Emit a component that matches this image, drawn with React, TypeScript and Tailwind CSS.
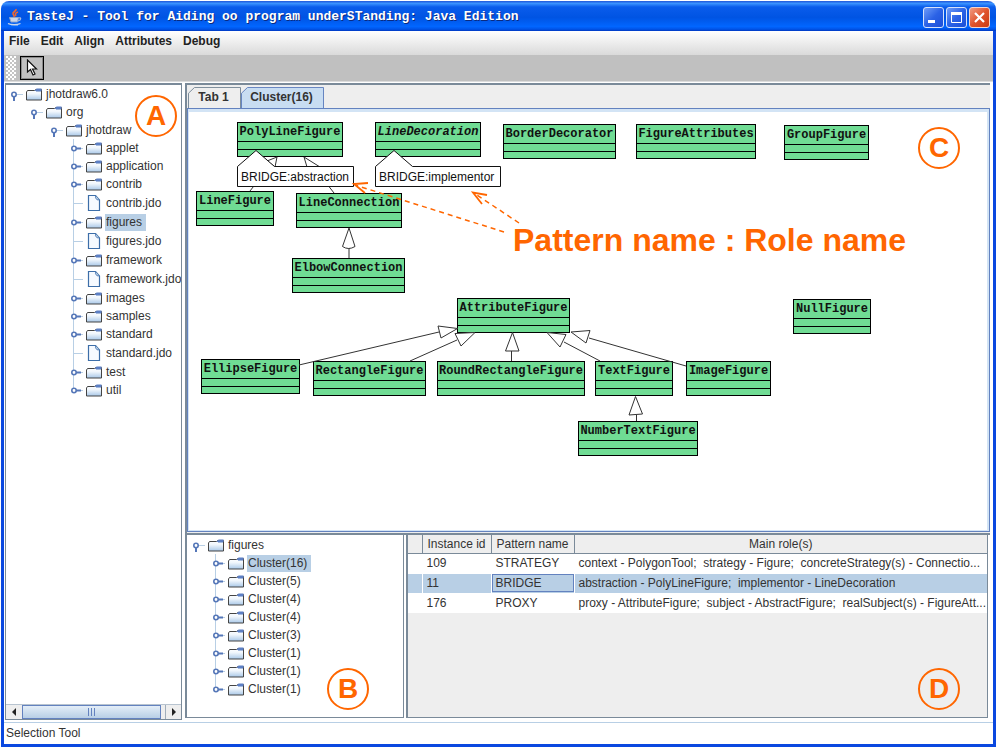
import React from "react";

type TreeItem = {
  label: string;
  kind?: "file";
  selected?: boolean;
  children?: TreeItem[];
};

const projectTree: TreeItem = {
  label: "jhotdraw6.0",
  children: [
    {
      label: "org",
      children: [
        {
          label: "jhotdraw",
          children: [
            { label: "applet" },
            { label: "application" },
            { label: "contrib" },
            { label: "contrib.jdo", kind: "file" },
            { label: "figures", selected: true },
            { label: "figures.jdo", kind: "file" },
            { label: "framework" },
            { label: "framework.jdo", kind: "file" },
            { label: "images" },
            { label: "samples" },
            { label: "standard" },
            { label: "standard.jdo", kind: "file" },
            { label: "test" },
            { label: "util" },
          ],
        },
      ],
    },
  ],
};

const clusterTree: TreeItem = {
  label: "figures",
  children: [
    { label: "Cluster(16)", selected: true },
    { label: "Cluster(5)" },
    { label: "Cluster(4)" },
    { label: "Cluster(4)" },
    { label: "Cluster(3)" },
    { label: "Cluster(1)" },
    { label: "Cluster(1)" },
    { label: "Cluster(1)" },
  ],
};

type ClassBox = { name: string; x: number; y: number; abstract?: boolean };

const classes: ClassBox[] = [
  { name: "PolyLineFigure", x: 48, y: 10 },
  { name: "LineDecoration", x: 186, y: 10, abstract: true },
  { name: "BorderDecorator", x: 314, y: 12 },
  { name: "FigureAttributes", x: 447, y: 12 },
  { name: "GroupFigure", x: 595, y: 13 },
  { name: "LineFigure", x: 7, y: 79 },
  { name: "LineConnection", x: 107, y: 81 },
  { name: "ElbowConnection", x: 103, y: 146 },
  { name: "AttributeFigure", x: 268, y: 186 },
  { name: "NullFigure", x: 604, y: 187 },
  { name: "EllipseFigure", x: 12, y: 247 },
  { name: "RectangleFigure", x: 124, y: 249 },
  { name: "RoundRectangleFigure", x: 248, y: 249 },
  { name: "TextFigure", x: 406, y: 249 },
  { name: "ImageFigure", x: 497, y: 249 },
  { name: "NumberTextFigure", x: 389, y: 309 },
];

const instances = [
  {
    id: "109",
    pattern: "STRATEGY",
    roles: "context - PolygonTool;  strategy - Figure;  concreteStrategy(s) - Connectio...",
  },
  {
    id: "11",
    pattern: "BRIDGE",
    roles: "abstraction - PolyLineFigure;  implementor - LineDecoration",
    selected: true,
  },
  {
    id: "176",
    pattern: "PROXY",
    roles: "proxy - AttributeFigure;  subject - AbstractFigure;  realSubject(s) - FigureAtt...",
  },
];

function FolderIcon() {
  return (
    <svg viewBox="0 0 16 14" className="h-3.5 w-4 shrink-0" aria-hidden="true">
      <defs>
        <linearGradient id="folder" x1="0" y1="0" x2="0" y2="1">
          <stop offset="0" stopColor="#ffffff" />
          <stop offset="0.4" stopColor="#f0f6fc" />
          <stop offset="1" stopColor="#a9c8e8" />
        </linearGradient>
      </defs>
      <path d="M.5 13V5l1-1.500h7l1.500-1h5.500V13z" fill="url(#folder)" stroke="#444" />
      <path d="M8.500 4l2-2.500h5V4z" fill="#5c7fc4" />
      <path d="M10 4.500h5" stroke="#a3b8dd" />
    </svg>
  );
}

function FileIcon() {
  return (
    <svg viewBox="0 0 16 16" className="size-4 shrink-0" aria-hidden="true">
      <path d="M2.500.500h7l4 4.500v10.500h-11z" fill="#f6faff" stroke="#3d6ea8" strokeWidth="1.200" />
      <path d="M9.500.800v2l1.500 2h2.200" fill="#b8cfe5" stroke="#5f88bd" />
    </svg>
  );
}

function Handle({ open, file, height, rail }: { open: boolean; file: boolean; height: number; rail: "none" | "full" | "half" }) {
  const mid = height / 2;
  return (
    <svg viewBox={`0 0 20 ${height}`} className="w-5 shrink-0" style={{ height }} aria-hidden="true">
      {rail !== "none" && (
        <path d={`M7.500 0V${rail === "full" ? height : mid}`} stroke="#b8cfe5" fill="none" />
      )}
      <path d={`M8 ${mid + 0.5}H17`} stroke="#b8cfe5" />
      {!file && (
        <>
          <path
            d={open ? `M8 ${mid + 2}V${mid + 7}` : `M10 ${mid + 0.5}H15`}
            stroke="#5577b8"
            strokeWidth="2"
          />
          <circle cx="8" cy={mid + 0.5} r="2.200" fill="#fff" stroke="#5577b8" strokeWidth="1.600" />
        </>
      )}
    </svg>
  );
}

function TreeNode({ item, root = false, last = true }: { item: TreeItem; root?: boolean; last?: boolean }) {
  const file = item.kind === "file";
  const open = Boolean(item.children);
  return (
    <li role="treeitem" aria-selected={Boolean(item.selected)}>
      <div className={file ? "flex h-5 items-center" : "flex h-[18px] items-center"}>
        <Handle
          open={open}
          file={file}
          height={file ? 20 : 18}
          rail={root || open ? "none" : last ? "half" : "full"}
        />
        {file ? <FileIcon /> : <FolderIcon />}
        <span
          className={
            item.selected
              ? "ml-[3px] bg-[#b8cfe5] pr-1 pl-px leading-[17px] whitespace-nowrap"
              : "ml-[3px] pr-1 pl-px leading-[17px] whitespace-nowrap"
          }
        >
          {item.label}
        </span>
      </div>
      {item.children && (
        <ul role="group" className="pl-5">
          {item.children.map((child, i) => (
            <TreeNode key={i} item={child} last={i === item.children!.length - 1} />
          ))}
        </ul>
      )}
    </li>
  );
}

function Marker({ letter }: { letter: string }) {
  return (
    <div className="flex size-[42px] items-center justify-center rounded-full border-2 border-[#ff6600] text-[28px] leading-none font-bold text-[#ff6600]">
      {letter}
    </div>
  );
}

function JavaLogo() {
  return (
    <svg viewBox="0 0 16 18" className="h-[18px] w-4 shrink-0" fill="none" aria-hidden="true">
      <path d="M9 1c1 2-4 3-3 5 .5 1 1.500 1.500 1 3M11 4c-3 1-3 2.500-2 4" stroke="#f0672e" strokeWidth="1.600" />
      <path d="M2.500 9.500h9l-1 4.500h-6.500z" fill="#c9d6ea" stroke="#8fa5cc" />
      <path d="M11.500 10c3-1 3 2-.5 3" stroke="#a9bbdc" strokeWidth="1.200" />
      <path d="M1 15.500c3 1.500 9 1.500 12.500 0M4 17h7" stroke="#c9d6ea" strokeWidth="1.200" />
    </svg>
  );
}

function TitleBar() {
  const btn =
    "flex size-[21px] items-center justify-center rounded-[3px] border border-[#d5e2fb] bg-gradient-to-br from-[#6f9bf7] via-[#2b62e6] to-[#1c4fd8]";
  return (
    <header className="flex h-[30px] shrink-0 items-center rounded-t-lg bg-[linear-gradient(180deg,#1f55d8_0%,#3a93ff_8%,#0a5ceb_20%,#0054e3_55%,#0166ff_85%,#0054e8_94%,#0038c0_100%)] pt-0.5 pr-1.5 pl-1.5">
      <JavaLogo />
      <h1 className="ml-1 flex-1 font-['Liberation_Mono',monospace] text-[13px] leading-4 font-bold whitespace-nowrap text-white [text-shadow:1px_1px_0_#0a2a80]">
        TasteJ - Tool for Aiding oo program underSTanding: Java Edition
      </h1>
      <div className="flex gap-0.5">
        <button type="button" aria-label="Minimize" className={btn}>
          <svg viewBox="0 0 19 19" className="size-[19px]">
            <path d="M4 13.500h7" stroke="#fff" strokeWidth="3" />
          </svg>
        </button>
        <button type="button" aria-label="Maximize" className={btn}>
          <svg viewBox="0 0 19 19" className="size-[19px]" fill="none">
            <path d="M4.500 5v9.500h10V5" stroke="#fff" />
            <path d="M4 5.500h11" stroke="#fff" strokeWidth="3" />
          </svg>
        </button>
        <button
          type="button"
          aria-label="Close"
          className="flex size-[21px] items-center justify-center rounded-[3px] border border-[#f3d5cc] bg-gradient-to-br from-[#f09a80] via-[#e0542c] to-[#c93a10]"
        >
          <svg viewBox="0 0 19 19" className="size-[19px]">
            <path d="M5 5l9 9M14 5l-9 9" stroke="#fff" strokeWidth="2.200" />
          </svg>
        </button>
      </div>
    </header>
  );
}

function Toolbar() {
  return (
    <div role="toolbar" className="flex h-[27px] shrink-0 items-center border-b border-[#dcdcdc] bg-[#c0c0c0] pl-0.5">
      <svg className="h-6 w-2.5" aria-hidden="true">
        <defs>
          <pattern id="grip" width="4" height="4" patternUnits="userSpaceOnUse">
            <rect width="4" height="4" fill="#c4c4c4" />
            <rect width="2" height="2" fill="#fff" />
            <rect x="2" y="2" width="2" height="2" fill="#fff" />
          </pattern>
        </defs>
        <rect width="10" height="24" fill="url(#grip)" />
      </svg>
      <button
        type="button"
        aria-label="Selection Tool"
        className="ml-1 flex size-6 items-center justify-center border border-black bg-[#c0c0c0] outline-1 -outline-offset-2 outline-[#8a8a8a]"
      >
        <svg viewBox="0 0 12 18" className="h-[18px] w-3">
          <path
            d="M1.500 1v12l3-2.500 2.500 5.500 2-1-2.500-5h4z"
            fill="#fff"
            stroke="#111"
            strokeWidth="1.200"
          />
        </svg>
      </button>
    </div>
  );
}

function ScrollBar() {
  return (
    <div className="flex h-[15px] shrink-0 border-t border-[#b8c4d0] bg-[#eeeeee]">
      <button type="button" aria-label="Scroll left" className="flex w-4 items-center justify-center">
        <svg viewBox="0 0 6 8" className="h-2 w-1.5">
          <path d="M5 0v8L1 4z" fill="#222" />
        </svg>
      </button>
      <div className="flex flex-1 pr-1">
        <div className="flex flex-1 items-center justify-center gap-0.5 border border-[#6382bf] bg-gradient-to-b from-[#e4eef8] to-[#b8cfe5]">
          <i className="h-2 w-px bg-[#6382bf]" />
          <i className="h-2 w-px bg-[#6382bf]" />
          <i className="h-2 w-px bg-[#6382bf]" />
        </div>
      </div>
      <button
        type="button"
        aria-label="Scroll right"
        className="flex w-4 items-center justify-center border-l border-[#a0adba]"
      >
        <svg viewBox="0 0 6 8" className="h-2 w-1.5">
          <path d="M1 0v8l4-4z" fill="#222" />
        </svg>
      </button>
    </div>
  );
}

function Tab({ label, active = false }: { label: string; active?: boolean }) {
  return (
    <button
      type="button"
      role="tab"
      aria-selected={active}
      className={
        active
          ? "relative h-full w-[83px] pr-0.5 pb-0.5 text-center font-bold"
          : "relative h-full w-[53px] pr-0.5 pb-0.5 text-center font-bold"
      }
    >
      <svg
        className="absolute inset-0 size-full"
        viewBox={active ? "0 0 83 22" : "0 0 53 22"}
        preserveAspectRatio="none"
        aria-hidden="true"
      >
        {active ? (
          <path d="M.500 22V6.500l6-6h76V22" fill="#c8ddf2" stroke="#6382bf" />
        ) : (
          <path d="M.500 22V6.500l6-6h46V22" fill="#eeeeee" stroke="#7a8a99" />
        )}
      </svg>
      <span className="relative">{label}</span>
    </button>
  );
}

function ClassNode({ node }: { node: ClassBox }) {
  return (
    <div
      className="absolute h-[35px] border border-black bg-[#70dc94] font-['Liberation_Mono',monospace] text-[#111]"
      style={{ left: node.x, top: node.y, width: node.name.length * 7 + 8 }}
    >
      <div
        className={
          node.abstract
            ? "flex h-[19px] justify-center border-b border-black text-xs leading-[18px] font-bold whitespace-nowrap italic"
            : "flex h-[19px] justify-center border-b border-black text-xs leading-[18px] font-bold whitespace-nowrap"
        }
      >
        {node.name}
      </div>
      <div className="h-2 border-b border-black" />
    </div>
  );
}

function Diagram() {
  return (
    <div className="relative min-h-0 flex-1 overflow-hidden bg-white">
      {classes.map((c) => (
        <ClassNode key={c.name} node={c} />
      ))}
      {/* generalization arrows */}
      <svg className="absolute inset-0 size-full" fill="#fff" stroke="#333" strokeWidth="1">
        <path d="M61 79L78 57M145 81L124 54" />
        <path d="M88 45L78 49L86 55zM115 45L118 55L131 55z" />
        <path d="M160 146v-10M160 116l-6.500 18.500q6 4 12.500 0z" />
        <path d="M110 253L250 220" />
        <path d="M249 214L268.500 216.500L252 226z" />
        <path d="M221 249L268 228" />
        <path d="M266 221.500L286 220.500L272 234z" />
        <path d="M322.500 249v-10M323.500 220.500l-7 18.500h13.500z" />
        <path d="M411 249L375 230" />
        <path d="M358 220.500L377 222.500L371 235z" />
        <path d="M497 254L400 226" />
        <path d="M382 220L401 218.500L397 231z" />
        <path d="M447.500 309v-6M446.500 284.500l-6.500 18.500l13.500-1z" />
      </svg>
      {/* role callouts */}
      <svg
        className="absolute inset-0 size-full font-['Liberation_Sans',Arial,sans-serif] text-xs"
        fill="#fff"
        stroke="#111"
      >
        <path d="M48.500 74.500v-20l18.500-16l18.500 16h79v20z" />
        <path d="M186.500 74.500v-20l18.500-16l18.500 16h88v20z" />
        <text x="52" y="69" fill="#111" stroke="none">
          BRIDGE:abstraction
        </text>
        <text x="190" y="69" fill="#111" stroke="none">
          BRIDGE:implementor
        </text>
      </svg>
      {/* annotation arrows */}
      <svg className="absolute inset-0 size-full" fill="none" stroke="#ff6600" strokeWidth="1.500">
        <path d="M315 120L166 73M330 111L285 81" strokeDasharray="5 4" />
        <path d="M179 71L165 72L176 81M298 83L284 80.500L293 92" strokeWidth="1.800" />
      </svg>
      <p className="absolute top-[110px] left-[324px] text-[32px] leading-9 font-bold whitespace-nowrap text-[#ff6600]">
        Pattern name : Role name
      </p>
      <div className="absolute top-[15px] right-[27px]">
        <Marker letter="C" />
      </div>
    </div>
  );
}

function InstanceTable() {
  return (
    <table className="w-full table-fixed border-collapse text-left">
      <colgroup>
        <col className="w-3.5" />
        <col className="w-[69px]" />
        <col className="w-[83px]" />
        <col />
      </colgroup>
      <thead>
        <tr className="h-[18px] bg-[#eeeeee] [&>th]:border-b [&>th]:border-[#7a8a99] [&>th]:p-0 [&>th]:text-center [&>th]:leading-4 [&>th]:font-normal [&>th]:whitespace-nowrap [&>th:not(:last-child)]:border-r">
          <th aria-label="Row" />
          <th>Instance id</th>
          <th>Pattern name</th>
          <th>Main role(s)</th>
        </tr>
      </thead>
      <tbody>
        {instances.map((row) => (
          <tr
            key={row.id}
            className={
              row.selected
                ? "h-5 bg-[#b8cfe5] [&>td]:border-y [&>td]:border-white [&>td]:p-0 [&>td]:leading-4"
                : "h-5 bg-white [&>td]:p-0 [&>td]:leading-4"
            }
          >
            <td className="border-r border-white" />
            <td className="border-r border-white">
              <span className="pl-1">{row.id}</span>
            </td>
            <td className="border-r border-white">
              <span
                className={
                  row.selected
                    ? "block border border-[#6382bf] pl-[3px]"
                    : "block pl-1"
                }
              >
                {row.pattern}
              </span>
            </td>
            <td className="overflow-hidden whitespace-pre">
              <span className="pl-1">{row.roles}</span>
            </td>
          </tr>
        ))}
      </tbody>
    </table>
  );
}

export default function App() {
  return (
    <div className="flex h-screen flex-col overflow-hidden bg-white p-px font-['Liberation_Sans',Arial,sans-serif] text-xs text-[#333]">
      <TitleBar />
      <div className="flex min-h-0 flex-1 flex-col border-x-[3px] border-b-[3px] border-[#0a48e0] bg-white">
        <nav className="flex h-6 shrink-0 items-center gap-[11px] bg-gradient-to-b from-white to-[#dadada] pb-1 pl-[5px] font-bold text-[#222]">
          <button type="button">File</button>
          <button type="button">Edit</button>
          <button type="button">Align</button>
          <button type="button">Attributes</button>
          <button type="button">Debug</button>
        </nav>
        <Toolbar />
        <main className="flex min-h-0 flex-1 gap-[3px] pt-px pr-[3px] pb-0.5 pl-px">
          <aside className="relative flex w-[177px] shrink-0 flex-col border border-t-2 border-[#7a8a99] bg-white">
            <ul role="tree" className="min-h-0 flex-1 overflow-hidden">
              <TreeNode item={projectTree} root />
            </ul>
            <ScrollBar />
            <div className="absolute top-2.5 right-1">
              <Marker letter="A" />
            </div>
          </aside>
          <div className="flex min-w-0 flex-1 flex-col">
            <section className="flex min-h-0 flex-1 flex-col border-t-2 border-l-2 border-[#7a8a99] bg-[#eeeeee] pb-px">
              <div role="tablist" className="flex h-[23px] shrink-0 pt-0.5 pl-px">
                <Tab label="Tab 1" />
                <Tab label="Cluster(16)" active />
              </div>
              <div className="flex min-h-0 flex-1 flex-col border border-[#6382bf] bg-[#d3e4f5] pt-[3px] pr-0.5 pb-px pl-px">
                <Diagram />
              </div>
            </section>
            <div className="flex h-[187px] shrink-0 gap-0.5 border-t-2 border-[#7a8a99] pr-0.5 pb-0.5">
              <section className="relative w-[219px] shrink-0 border-r border-b border-l-2 border-[#7a8a99] bg-white">
                <ul role="tree" className="pt-px pl-px">
                  <TreeNode item={clusterTree} root />
                </ul>
                <div className="absolute right-[34px] bottom-[7px]">
                  <Marker letter="B" />
                </div>
              </section>
              <section className="relative min-w-0 flex-1 border-r border-b border-l-2 border-[#7a8a99] bg-[#eeeeee]">
                <InstanceTable />
                <div className="absolute right-[27px] bottom-[7px]">
                  <Marker letter="D" />
                </div>
              </section>
            </div>
          </div>
        </main>
        <footer className="h-[22px] shrink-0 border-t border-[#b8cfe5] pl-0.5 leading-5">Selection Tool</footer>
      </div>
    </div>
  );
}
